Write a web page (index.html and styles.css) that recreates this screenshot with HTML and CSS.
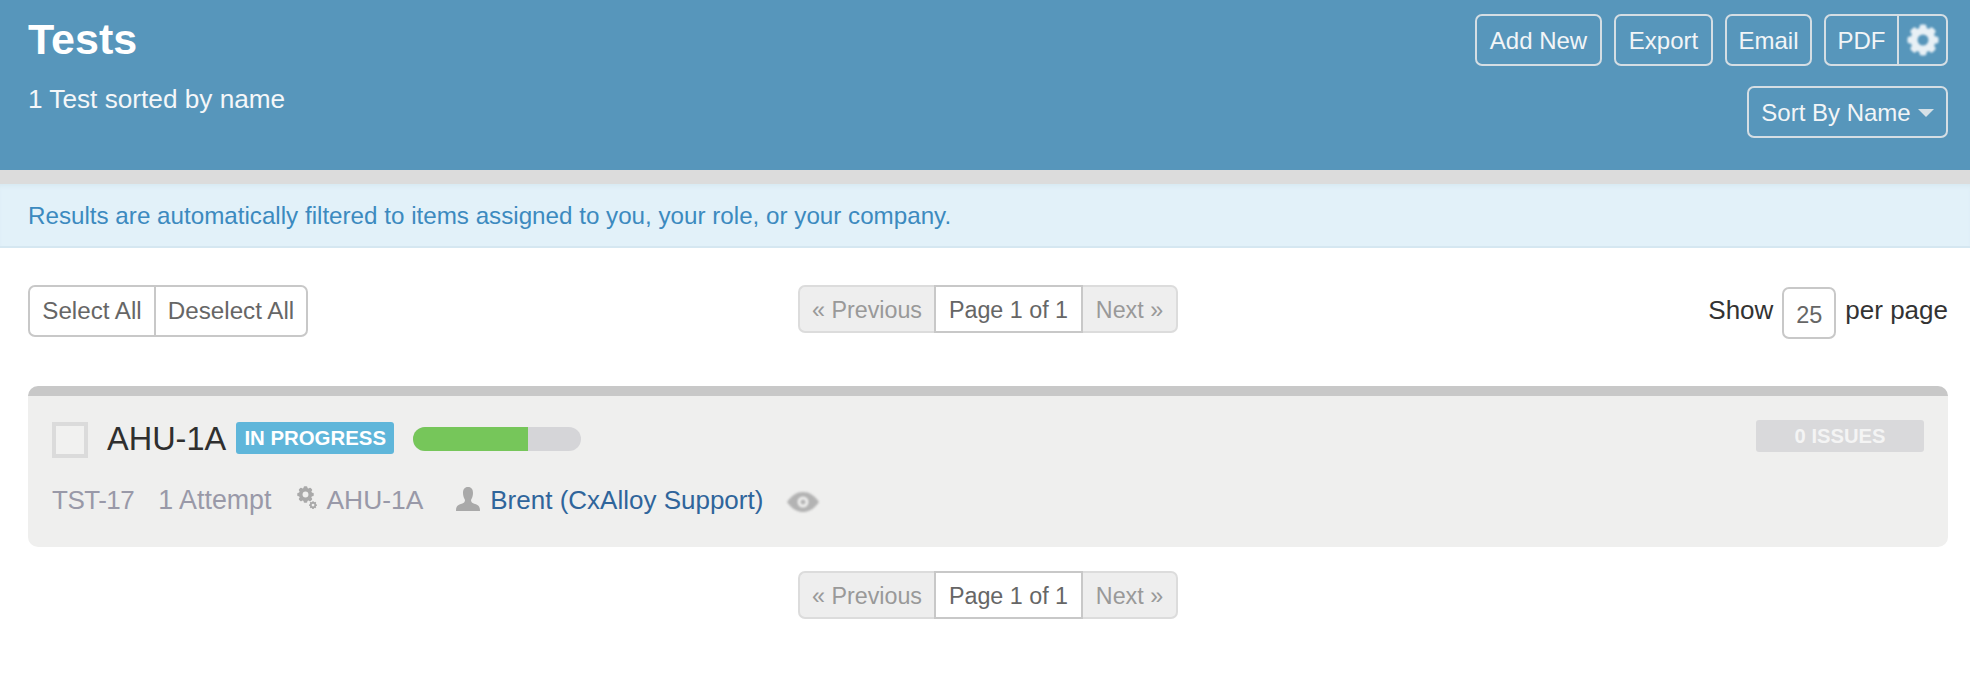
FILE: index.html
```html
<!DOCTYPE html>
<html lang="en">
<head>
  <meta charset="UTF-8">
  <title>Tests</title>
  <link rel="stylesheet" href="styles.css">
</head>
<body>
  <svg class="defs" width="0" height="0">
    <defs>
      <symbol id="cog" viewBox="0 0 32 32">
        <circle cx="16" cy="16" r="9" fill="none" stroke="currentColor" stroke-width="7"/>
        <rect x="12.5" y="0.5" width="7" height="31" rx="2" fill="currentColor"/>
        <rect x="12.5" y="0.5" width="7" height="31" rx="2" fill="currentColor" transform="rotate(45 16 16)"/>
        <rect x="12.5" y="0.5" width="7" height="31" rx="2" fill="currentColor" transform="rotate(90 16 16)"/>
        <rect x="12.5" y="0.5" width="7" height="31" rx="2" fill="currentColor" transform="rotate(135 16 16)"/>
        <circle class="cog-hole" cx="16" cy="16" r="5.5"/>
      </symbol>
    </defs>
  </svg>

  <!-- header -->
  <header class="header">
    <div>
      <h1 class="title">Tests</h1>
      <p class="subtitle">1 Test sorted by name</p>
    </div>
    <div class="actions">
      <div class="action-row">
        <a class="hbtn btn-add">Add New</a>
        <a class="hbtn btn-export">Export</a>
        <a class="hbtn btn-email">Email</a>
        <div class="hgroup">
          <a class="hbtn btn-pdf">PDF</a>
          <a class="hbtn btn-cog"><svg class="cog-head"><use href="#cog"/></svg></a>
        </div>
      </div>
      <div class="action-row">
        <a class="hbtn btn-sort">Sort By Name<span class="caret"></span></a>
      </div>
    </div>
  </header>
  <div class="strip"></div>
  <div class="notice">Results are automatically filtered to items assigned to you, your role, or your company.</div>

  <!-- toolbar -->
  <div class="toolbar">
    <div class="select-group">
      <a class="select-btn btn-select">Select All</a>
      <a class="select-btn btn-deselect">Deselect All</a>
    </div>
    <div class="pager">
      <a class="pager-off pager-prev">« Previous</a>
      <span class="pager-cur">Page 1 of 1</span>
      <a class="pager-off pager-next">Next »</a>
    </div>
    <div class="per-page">
      <span>Show</span>
      <span class="per-input">25</span>
      <span>per page</span>
    </div>
  </div>

  <!-- list -->
  <div class="card">
    <div class="card-top">
      <span class="check"></span>
      <span class="card-name">AHU-1A</span>
      <span class="badge">IN PROGRESS</span>
      <span class="progress"><span class="progress-fill" style="width: 68.5%"></span></span>
      <span class="issues">0 ISSUES</span>
    </div>
    <div class="card-meta">
      <span class="meta-id">TST-17</span>
      <span class="meta-att">1 Attempt</span>
      <span class="meta-sys">
        <span class="cogs">
          <svg class="cog-big"><use href="#cog"/></svg>
          <svg class="cog-small"><use href="#cog"/></svg>
        </span>
        AHU-1A
      </span>
      <svg class="person" viewBox="0 0 24 24"><path d="M12 0C15.500 0 17 2.500 17 6C17 9 16 11 15 13C15 15 16 16 19 17C22 18 24 19 24 24L0 24C0 19 2 18 5 17C8 16 9 15 9 13C8 11 7 9 7 6C7 2.500 8.500 0 12 0Z"/></svg>
      <a class="meta-user">Brent (CxAlloy Support)</a>
      <svg class="eye" viewBox="0 0 32 20">
        <path class="eye-lid" d="M0 10C5 3 10 0 16 0C22 0 27 3 32 10C27 17 22 20 16 20C10 20 5 17 0 10Z"/>
        <circle class="eye-ring" cx="16" cy="10" r="5.500"/>
        <circle class="eye-lid" cx="16" cy="10" r="2.500"/>
      </svg>
    </div>
  </div>

  <div class="pager pager-bottom">
    <a class="pager-off pager-prev">« Previous</a>
    <span class="pager-cur">Page 1 of 1</span>
    <a class="pager-off pager-next">Next »</a>
  </div>
</body>
</html>
```

FILE: styles.css
```css
body {
  margin: 0;
  background: #fff;
  font-family: "Liberation Sans", Arial, sans-serif;
  color: #333;
}
.defs {
  display: block;
  height: 0;
}

/* header */
.header {
  display: flex;
  justify-content: space-between;
  height: 170px;
  box-sizing: border-box;
  padding: 14px 22px 0 28px;
  background: #5796bb;
  color: #fff;
}
.title {
  margin: 0;
  font-size: 43px;
  line-height: 50px;
  font-weight: bold;
}
.subtitle {
  margin: 19px 0 0;
  font-size: 26.200px;
  line-height: 32px;
  color: #f4f7f9;
}
.actions {
  display: flex;
  flex-direction: column;
  align-items: flex-end;
  gap: 20px;
}
.action-row {
  display: flex;
  gap: 12px;
}
.hbtn {
  display: block;
  box-sizing: border-box;
  height: 52px;
  border: 2px solid #d5dee4;
  border-radius: 7px;
  font-size: 24px;
  line-height: 49px;
  text-align: center;
  color: #f2f5f7;
}
.btn-add { width: 127px; }
.btn-export { width: 99px; }
.btn-email { width: 87px; }
.btn-sort {
  width: 201px;
  line-height: 50px;
}
.hgroup {
  display: flex;
}
.btn-pdf {
  width: 73px;
  border-radius: 7px 0 0 7px;
  border-right: 0;
}
.btn-cog {
  width: 51px;
  border-radius: 0 7px 7px 0;
  color: #e8f0f5;
  --hole: #5796bb;
}
.cog-head {
  display: block;
  width: 32px;
  height: 32px;
  margin: 8px 0 0 8px;
  filter: blur(0.8px);
}
.cog-hole {
  fill: var(--hole);
}
.caret {
  display: inline-block;
  margin-left: 7px;
  vertical-align: 4px;
  border-top: 8px solid #d5e0e6;
  border-left: 8px solid transparent;
  border-right: 8px solid transparent;
}

.strip {
  height: 14px;
  background: #dcdcdc;
}
.notice {
  height: 64px;
  box-sizing: border-box;
  padding-left: 28px;
  border-bottom: 2px solid #d5e7f1;
  background: #e2f1f9;
  box-shadow: inset 0 4px 4px -2px #d6e8f1;
  font-size: 24.200px;
  line-height: 64px;
  color: #3c8abf;
}

/* toolbar */
.toolbar {
  display: grid;
  grid-template-columns: 1fr auto 1fr;
  align-items: start;
  padding: 37px 22px 0 28px;
}
.select-group {
  display: flex;
  justify-self: start;
  height: 52px;
  box-sizing: border-box;
  border: 2px solid #c8c8c8;
  border-radius: 7px;
}
.select-btn {
  box-sizing: border-box;
  font-size: 24.200px;
  line-height: 48px;
  text-align: center;
  color: #666;
}
.btn-select {
  width: 126px;
  border-right: 2px solid #c8c8c8;
}
.btn-deselect {
  width: 150px;
}
.pager {
  display: flex;
  height: 48px;
  font-size: 23.300px;
  line-height: 46px;
}
.pager-off {
  box-sizing: border-box;
  border: 2px solid #dcdcdc;
  background: #eee;
  text-align: center;
  color: #999;
}
.pager-prev {
  width: 136px;
  border-right: 0;
  border-radius: 7px 0 0 7px;
}
.pager-next {
  width: 95px;
  border-left: 0;
  border-radius: 0 7px 7px 0;
}
.pager-cur {
  box-sizing: border-box;
  width: 149px;
  border: 2px solid #c8c8c8;
  text-align: center;
  color: #666;
}
.per-page {
  display: flex;
  justify-content: flex-end;
  gap: 9px;
  font-size: 26px;
  line-height: 50px;
  color: #333;
}
.per-input {
  box-sizing: border-box;
  width: 54px;
  height: 52px;
  margin-top: 2px;
  border: 2px solid #c8c8c8;
  border-radius: 7px;
  font-size: 23.500px;
  line-height: 52px;
  text-align: center;
  color: #666;
}

/* card */
.card {
  box-sizing: border-box;
  height: 161px;
  margin: 47px 22px 0 28px;
  padding: 26px 24px 0;
  border-top: 10px solid #c8c8c8;
  border-radius: 10px;
  background: #efefee;
}
.card-top {
  display: flex;
  align-items: flex-start;
  height: 36px;
}
.check {
  box-sizing: border-box;
  width: 36px;
  height: 36px;
  border: 4px solid #dbdbdb;
  background: #f1f1f0;
}
.card-name {
  margin: -2px 0 0 19px;
  font-size: 32.500px;
  line-height: 38px;
  color: #2f2f2f;
}
.badge {
  width: 158px;
  height: 32px;
  margin-left: 10px;
  border-radius: 3px;
  background: #5fb6da;
  font-size: 20.400px;
  font-weight: bold;
  line-height: 33px;
  text-align: center;
  color: #fff;
}
.progress {
  display: block;
  width: 168px;
  height: 24px;
  margin: 5px 0 0 19px;
  border-radius: 12px;
  overflow: hidden;
  background: #d5d5d8;
}
.progress-fill {
  display: block;
  height: 100%;
  background: #76c65a;
}
.issues {
  width: 168px;
  height: 32px;
  margin: -2px 0 0 auto;
  border-radius: 3px;
  background: #d9d9db;
  font-size: 20.200px;
  font-weight: bold;
  line-height: 33px;
  text-align: center;
  color: #f4f4f4;
}
.card-meta {
  display: flex;
  align-items: center;
  height: 36px;
  margin-top: 24px;
  font-size: 26px;
  color: #9999a8;
}
.meta-id {
  letter-spacing: -0.5px;
}
.meta-att {
  margin-left: 24px;
  font-size: 26.800px;
}
.meta-sys {
  display: flex;
  align-items: center;
  margin-left: 26px;
  font-size: 26.400px;
}
.cogs {
  display: block;
  position: relative;
  width: 29px;
  height: 24px;
  margin-top: -4px;
  color: #a9a9a9;
  --hole: #efefee;
}
.cog-big {
  position: absolute;
  left: 0;
  top: 0;
  width: 17px;
  height: 17px;
}
.cog-small {
  position: absolute;
  left: 12px;
  top: 15px;
  width: 8px;
  height: 8px;
}
.person {
  width: 24px;
  height: 24px;
  margin: -2px 0 0 33px;
  fill: #a9a9a9;
}
.meta-user {
  margin-left: 10px;
  color: #2f659b;
}
.eye {
  width: 32px;
  height: 20px;
  margin: 4px 0 0 24px;
  filter: blur(0.8px);
}
.eye-lid {
  fill: #b3b3b3;
}
.eye-ring {
  fill: #efefee;
}

.pager-bottom {
  justify-content: center;
  margin: 24px 0 0 6px;
}
```
